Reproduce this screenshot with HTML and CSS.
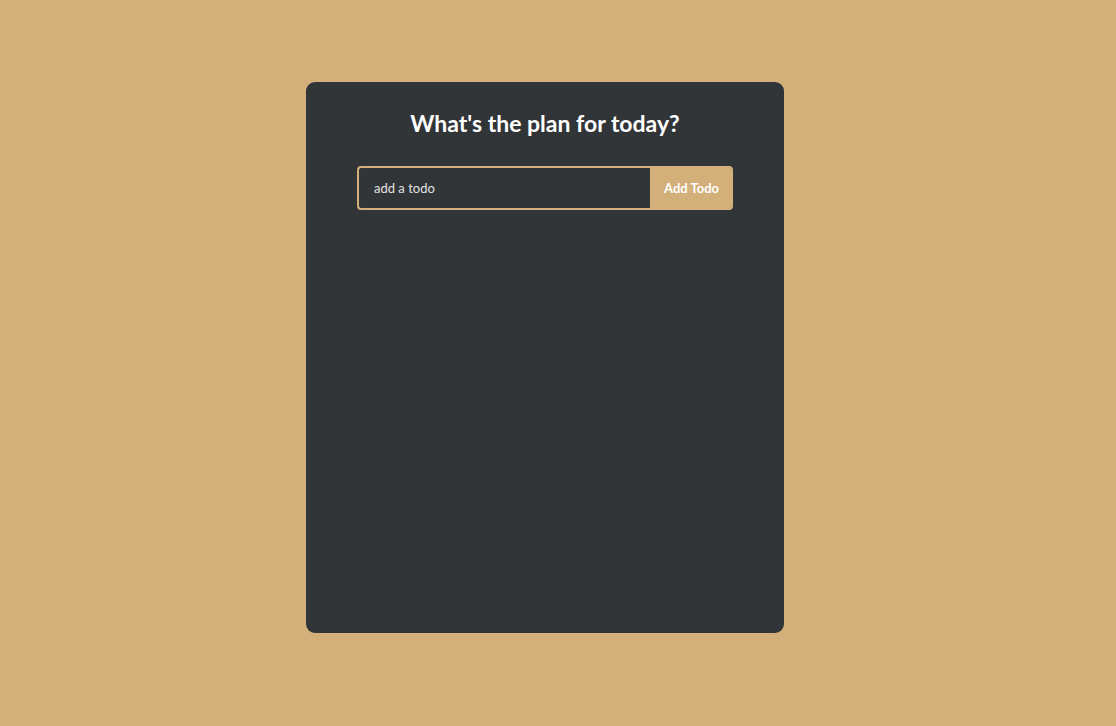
FILE: index.html
```html
<!DOCTYPE html>
<html>
<head>
<meta charset="utf-8">
<link rel="stylesheet" href="styles.css">
</head>
<body>
<div class="todo-app">
  <h1 class="title">What's the plan for today?</h1>
  <form class="todo-form">
    <input class="todo-input" type="text" placeholder="add a todo">
    <button class="todo-button" type="button">Add Todo</button>
  </form>
</div>
</body>
</html>
```
FILE: styles.css
```css
html, body {
  margin: 0;
  padding: 0;
  background: #d3b07a;
  height: 100%;
}
body {
  font-family: Lato, "Open Sans", sans-serif;
  padding: 82px 0 0 306px;
  box-sizing: border-box;
}
.todo-app {
  width: 478px;
  height: 551px;
  box-sizing: border-box;
  background: #323538;
  border-radius: 9px;
  padding-top: 26px;
  display: flex;
  flex-direction: column;
  align-items: center;
}
.title {
  margin: 0;
  color: #ffffff;
  font-size: 23px;
  line-height: 30px;
  font-weight: 700;
}
.todo-form {
  margin-top: 28px;
  display: flex;
  width: 376px;
  height: 44px;
}
.todo-input {
  flex: 1;
  min-width: 0;
  box-sizing: border-box;
  height: 44px;
  margin: 0;
  padding: 0 15px;
  background: transparent;
  border: 2px solid #d3b07a;
  border-right: none;
  border-radius: 4px 0 0 4px;
  color: #fff;
  font-family: inherit;
  font-size: 13px;
  outline: none;
}
.todo-input::placeholder {
  color: #e2e2e2;
}
.todo-button {
  width: 83px;
  height: 44px;
  margin: 0;
  padding: 0;
  border: none;
  border-radius: 0 4px 4px 0;
  background: #d3b07a;
  color: #fff;
  font-family: inherit;
  font-weight: 700;
  font-size: 13px;
}
```
